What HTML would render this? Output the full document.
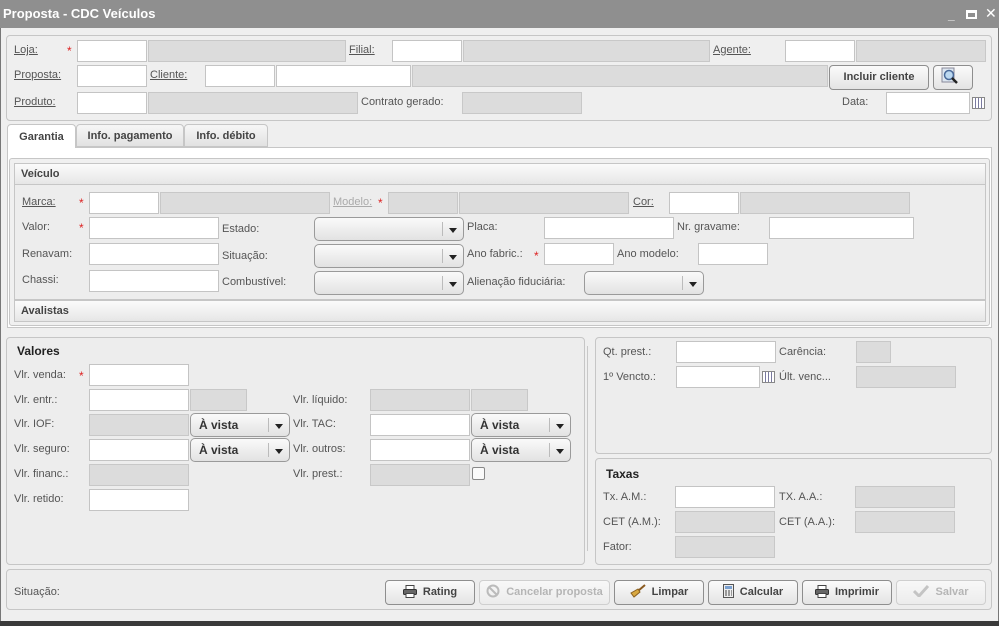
<!DOCTYPE html>
<html><head><meta charset="utf-8">
<style>
*{box-sizing:border-box;margin:0;padding:0}
body{width:999px;height:626px;overflow:hidden;background:#3a3a3a;font-family:"Liberation Sans","DejaVu Sans",sans-serif;font-size:11px;color:#555;position:relative}
#win{position:absolute;left:0;top:0;width:999px;height:621px;background:#efefef;box-shadow:inset 1px 0 0 #777,inset -1px 0 0 #777}
#title{position:absolute;left:0;top:0;width:999px;height:28px;background:#8f8f8f;color:#fff;font-weight:bold;font-size:13px;line-height:28px;padding-left:3px}
.a{position:absolute}
.box{position:absolute;border:1px solid #c6c6c6;border-radius:4px;background:#ededed}
.i{position:absolute;background:#fff;border:1px solid #c4c4c4;height:22px}
.g{position:absolute;background:#dcdcdc;border:1px solid #c8c8c8;height:22px}
.l{position:absolute;height:22px;line-height:22px;white-space:nowrap;color:#555}
.u{text-decoration:underline}
.s{position:absolute;color:#d22;font-size:12px;height:22px;line-height:24px}
.sel{position:absolute;height:24px;border:1px solid #9a9a9a;border-radius:5px;background:linear-gradient(#fafafa,#e2e2e2);font-weight:bold;color:#333;font-size:12px;line-height:22px;padding-left:8px}
.sel:after{content:"";position:absolute;right:6px;top:10px;border-left:4px solid transparent;border-right:4px solid transparent;border-top:5px solid #222}
.sel:before{content:"";position:absolute;right:20px;top:4px;height:14px;border-left:1px solid #bbb}
.b{position:absolute;height:25px;border:1px solid #8e8e8e;border-radius:4px;background:linear-gradient(#fbfbfb,#e4e4e4);font-weight:bold;color:#444;font-size:11px;line-height:23px;text-align:center}
.b.d{color:#b5b5b5;border-color:#cfcfcf;background:linear-gradient(#f8f8f8,#ececec)}
.b svg{vertical-align:middle;margin-right:6px;margin-top:-2px}
.hdr{position:absolute;background:linear-gradient(#fbfbfb,#e6e6e6);border:1px solid #c6c6c6;font-weight:bold;color:#444;font-size:11px;line-height:20px;padding-left:6px}
.t{position:absolute;font-weight:bold;color:#222;font-size:12px}
.cal{position:absolute;width:13px;height:12px;border:1px solid #888;background:repeating-linear-gradient(90deg,#fff 0 2px,#7a7aa0 2px 3px),#fff}
</style></head><body>
<div id="win">
<div id="title">Proposta - CDC Veículos</div>
<div class="a" style="left:948px;top:8px;color:#fff;font-size:12px;font-weight:bold">_</div>
<div class="a" style="left:966px;top:10px;width:11px;height:9px;border:2px solid #fff;border-top-width:3px"></div>
<div class="a" style="left:985px;top:5px;color:#fff;font-size:14px">✕</div>

<div class="box" style="left:6px;top:35px;width:986px;height:86px;background:#efefef"></div>
<div class="l u" style="left:14px;top:39px">Loja:</div><div class="s" style="left:67px;top:39px">*</div>
<div class="i" style="left:77px;top:40px;width:70px"></div><div class="g" style="left:148px;top:40px;width:198px"></div>
<div class="l u" style="left:349px;top:39px">Filial:</div>
<div class="i" style="left:392px;top:40px;width:70px"></div><div class="g" style="left:463px;top:40px;width:247px"></div>
<div class="l u" style="left:713px;top:39px">Agente:</div>
<div class="i" style="left:785px;top:40px;width:70px"></div><div class="g" style="left:856px;top:40px;width:130px"></div>

<div class="l u" style="left:14px;top:64px">Proposta:</div>
<div class="i" style="left:77px;top:65px;width:70px"></div>
<div class="l u" style="left:150px;top:64px">Cliente:</div>
<div class="i" style="left:205px;top:65px;width:70px"></div><div class="i" style="left:276px;top:65px;width:135px"></div>
<div class="g" style="left:412px;top:65px;width:416px"></div>
<div class="b" style="left:829px;top:65px;width:100px">Incluir cliente</div>
<div class="b" style="left:933px;top:65px;width:40px"><svg width="18" height="18" viewBox="0 0 18 18"><rect x="1" y="1" width="12" height="14" fill="#dde6f0" stroke="#889"/><circle cx="8" cy="8" r="4.5" fill="#bcd8f0" stroke="#4a6a9a" stroke-width="1.5"/><path d="M11 11l5 5" stroke="#222" stroke-width="2.5"/></svg></div>

<div class="l u" style="left:14px;top:91px">Produto:</div>
<div class="i" style="left:77px;top:92px;width:70px"></div><div class="g" style="left:148px;top:92px;width:210px"></div>
<div class="l" style="left:361px;top:91px">Contrato gerado:</div>
<div class="g" style="left:462px;top:92px;width:120px"></div>
<div class="l" style="left:842px;top:91px">Data:</div>
<div class="i" style="left:886px;top:92px;width:84px"></div>
<div class="cal" style="left:972px;top:97px"></div>

<div class="a" style="left:7px;top:147px;width:985px;height:181px;background:#fff;border:1px solid #c6c6c6"></div>
<div class="a" style="left:7px;top:124px;width:69px;height:24px;background:#fff;border:1px solid #c6c6c6;border-bottom:none;border-radius:4px 4px 0 0;text-align:center;line-height:24px;font-weight:bold;color:#444">Garantia</div>
<div class="a" style="left:76px;top:124px;width:108px;height:23px;background:linear-gradient(#f6f6f6,#e2e2e2);border:1px solid #c6c6c6;border-radius:4px 4px 0 0;text-align:center;line-height:22px;font-weight:bold;color:#444">Info. pagamento</div>
<div class="a" style="left:184px;top:124px;width:84px;height:23px;background:linear-gradient(#f6f6f6,#e2e2e2);border:1px solid #c6c6c6;border-radius:4px 4px 0 0;text-align:center;line-height:22px;font-weight:bold;color:#444">Info. débito</div>
<div class="a" style="left:9px;top:158px;width:981px;height:168px;background:#f0f0f0;border:1px solid #c6c6c6;border-radius:3px"></div>
<div class="hdr" style="left:14px;top:163px;width:972px;height:22px">Veículo</div>
<div class="a" style="left:14px;top:185px;width:972px;height:115px;background:#ededed;border:1px solid #c6c6c6;border-top:none"></div>

<div class="l u" style="left:22px;top:191px">Marca:</div><div class="s" style="left:79px;top:191px">*</div>
<div class="i" style="left:89px;top:192px;width:70px"></div><div class="g" style="left:160px;top:192px;width:170px"></div>
<div class="l u" style="left:333px;top:191px;color:#aaa">Modelo:</div><div class="s" style="left:378px;top:191px">*</div>
<div class="g" style="left:388px;top:192px;width:70px"></div><div class="g" style="left:459px;top:192px;width:170px"></div>
<div class="l u" style="left:633px;top:191px">Cor:</div>
<div class="i" style="left:669px;top:192px;width:70px"></div><div class="g" style="left:740px;top:192px;width:170px"></div>

<div class="l" style="left:22px;top:216px">Valor:</div><div class="s" style="left:79px;top:216px">*</div>
<div class="i" style="left:89px;top:217px;width:130px"></div>
<div class="l" style="left:222px;top:218px">Estado:</div><div class="sel" style="left:314px;top:217px;width:150px"></div>
<div class="l" style="left:467px;top:216px">Placa:</div><div class="i" style="left:544px;top:217px;width:130px"></div>
<div class="l" style="left:677px;top:216px">Nr. gravame:</div><div class="i" style="left:769px;top:217px;width:145px"></div>

<div class="l" style="left:22px;top:243px">Renavam:</div>
<div class="i" style="left:89px;top:243px;width:130px"></div>
<div class="l" style="left:222px;top:245px">Situação:</div><div class="sel" style="left:314px;top:244px;width:150px"></div>
<div class="l" style="left:467px;top:243px">Ano fabric.:</div><div class="s" style="left:534px;top:244px">*</div>
<div class="i" style="left:544px;top:243px;width:70px"></div>
<div class="l" style="left:617px;top:243px">Ano modelo:</div><div class="i" style="left:698px;top:243px;width:70px"></div>

<div class="l" style="left:22px;top:269px">Chassi:</div>
<div class="i" style="left:89px;top:270px;width:130px"></div>
<div class="l" style="left:222px;top:271px">Combustível:</div><div class="sel" style="left:314px;top:271px;width:150px"></div>
<div class="l" style="left:467px;top:271px">Alienação fiduciária:</div><div class="sel" style="left:584px;top:271px;width:120px"></div>

<div class="hdr" style="left:14px;top:300px;width:972px;height:22px">Avalistas</div>

<div class="box" style="left:6px;top:337px;width:579px;height:228px"></div>
<div class="a" style="left:587px;top:346px;width:1px;height:205px;background:#c8c8c8"></div>
<div class="t" style="left:17px;top:344px">Valores</div>
<div class="l" style="left:14px;top:364px">Vlr. venda:</div><div class="s" style="left:79px;top:364px">*</div>
<div class="i" style="left:89px;top:364px;width:100px"></div>
<div class="l" style="left:14px;top:389px">Vlr. entr.:</div>
<div class="i" style="left:89px;top:389px;width:100px"></div><div class="g" style="left:190px;top:389px;width:57px"></div>
<div class="l" style="left:293px;top:389px">Vlr. líquido:</div>
<div class="g" style="left:370px;top:389px;width:100px"></div><div class="g" style="left:471px;top:389px;width:57px"></div>
<div class="l" style="left:14px;top:413px">Vlr. IOF:</div>
<div class="g" style="left:89px;top:414px;width:100px"></div>
<div class="sel" style="left:190px;top:413px;width:100px">À vista</div>
<div class="l" style="left:293px;top:413px">Vlr. TAC:</div>
<div class="i" style="left:370px;top:414px;width:100px"></div>
<div class="sel" style="left:471px;top:413px;width:100px">À vista</div>
<div class="l" style="left:14px;top:438px">Vlr. seguro:</div>
<div class="i" style="left:89px;top:439px;width:100px"></div>
<div class="sel" style="left:190px;top:438px;width:100px">À vista</div>
<div class="l" style="left:293px;top:438px">Vlr. outros:</div>
<div class="i" style="left:370px;top:439px;width:100px"></div>
<div class="sel" style="left:471px;top:438px;width:100px">À vista</div>
<div class="l" style="left:14px;top:463px">Vlr. financ.:</div>
<div class="g" style="left:89px;top:464px;width:100px"></div>
<div class="l" style="left:293px;top:463px">Vlr. prest.:</div>
<div class="g" style="left:370px;top:464px;width:100px"></div>
<div class="a" style="left:472px;top:467px;width:13px;height:13px;border:1px solid #888;background:#fafafa;border-radius:2px"></div>
<div class="l" style="left:14px;top:488px">Vlr. retido:</div>
<div class="i" style="left:89px;top:489px;width:100px"></div>

<div class="box" style="left:595px;top:337px;width:397px;height:117px"></div>
<div class="l" style="left:603px;top:341px">Qt. prest.:</div>
<div class="i" style="left:676px;top:341px;width:100px"></div>
<div class="l" style="left:779px;top:341px">Carência:</div>
<div class="g" style="left:856px;top:341px;width:35px"></div>
<div class="l" style="left:603px;top:366px">1º Vencto.:</div>
<div class="i" style="left:676px;top:366px;width:84px"></div>
<div class="cal" style="left:762px;top:371px"></div>
<div class="l" style="left:779px;top:366px">Últ. venc...</div>
<div class="g" style="left:856px;top:366px;width:100px"></div>

<div class="box" style="left:595px;top:458px;width:397px;height:107px"></div>
<div class="t" style="left:606px;top:467px">Taxas</div>
<div class="l" style="left:603px;top:486px">Tx. A.M.:</div>
<div class="i" style="left:675px;top:486px;width:100px"></div>
<div class="l" style="left:779px;top:486px">TX. A.A.:</div>
<div class="g" style="left:855px;top:486px;width:100px"></div>
<div class="l" style="left:603px;top:511px">CET (A.M.):</div>
<div class="g" style="left:675px;top:511px;width:100px"></div>
<div class="l" style="left:779px;top:511px">CET (A.A.):</div>
<div class="g" style="left:855px;top:511px;width:100px"></div>
<div class="l" style="left:603px;top:536px">Fator:</div>
<div class="g" style="left:675px;top:536px;width:100px"></div>

<div class="box" style="left:6px;top:569px;width:986px;height:41px"></div>
<div class="l" style="left:14px;top:581px">Situação:</div>
<div class="b" style="left:385px;top:580px;width:90px"><svg width="14" height="13" viewBox="0 0 14 13"><rect x="3" y="0.5" width="8" height="4" fill="#fff" stroke="#444"/><rect x="0.5" y="4.5" width="13" height="5" rx="1" fill="#666" stroke="#333"/><rect x="3" y="8.5" width="8" height="4" fill="#fff" stroke="#444"/></svg>Rating</div>
<div class="b d" style="left:479px;top:580px;width:131px"><svg width="14" height="14" viewBox="0 0 14 14"><circle cx="7" cy="7" r="5.5" fill="none" stroke="#bbb" stroke-width="2"/><path d="M3 3l8 8" stroke="#bbb" stroke-width="2"/></svg>Cancelar proposta</div>
<div class="b" style="left:614px;top:580px;width:90px"><svg width="16" height="14" viewBox="0 0 16 14"><path d="M15 1L8 7" stroke="#8a5a20" stroke-width="2"/><path d="M8 5l-7 4 3 4 6-5z" fill="#d8a840" stroke="#8a6020"/></svg>Limpar</div>
<div class="b" style="left:708px;top:580px;width:90px"><svg width="11" height="14" viewBox="0 0 11 14"><rect x="0.5" y="0.5" width="10" height="13" fill="#eee" stroke="#555"/><rect x="2" y="2" width="7" height="3" fill="#7aa0d0"/><path d="M2 7h2M5 7h2M8 7h1M2 9h2M5 9h2M8 9h1M2 11h2M5 11h2M8 11h1" stroke="#444"/></svg>Calcular</div>
<div class="b" style="left:802px;top:580px;width:90px"><svg width="14" height="13" viewBox="0 0 14 13"><rect x="3" y="0.5" width="8" height="4" fill="#fff" stroke="#444"/><rect x="0.5" y="4.5" width="13" height="5" rx="1" fill="#666" stroke="#333"/><rect x="3" y="8.5" width="8" height="4" fill="#fff" stroke="#444"/></svg>Imprimir</div>
<div class="b d" style="left:896px;top:580px;width:90px"><svg width="16" height="12" viewBox="0 0 16 12"><path d="M1 6l5 5 9-10" fill="none" stroke="#c4c4c4" stroke-width="3"/></svg>Salvar</div>
</div>
</body></html>
